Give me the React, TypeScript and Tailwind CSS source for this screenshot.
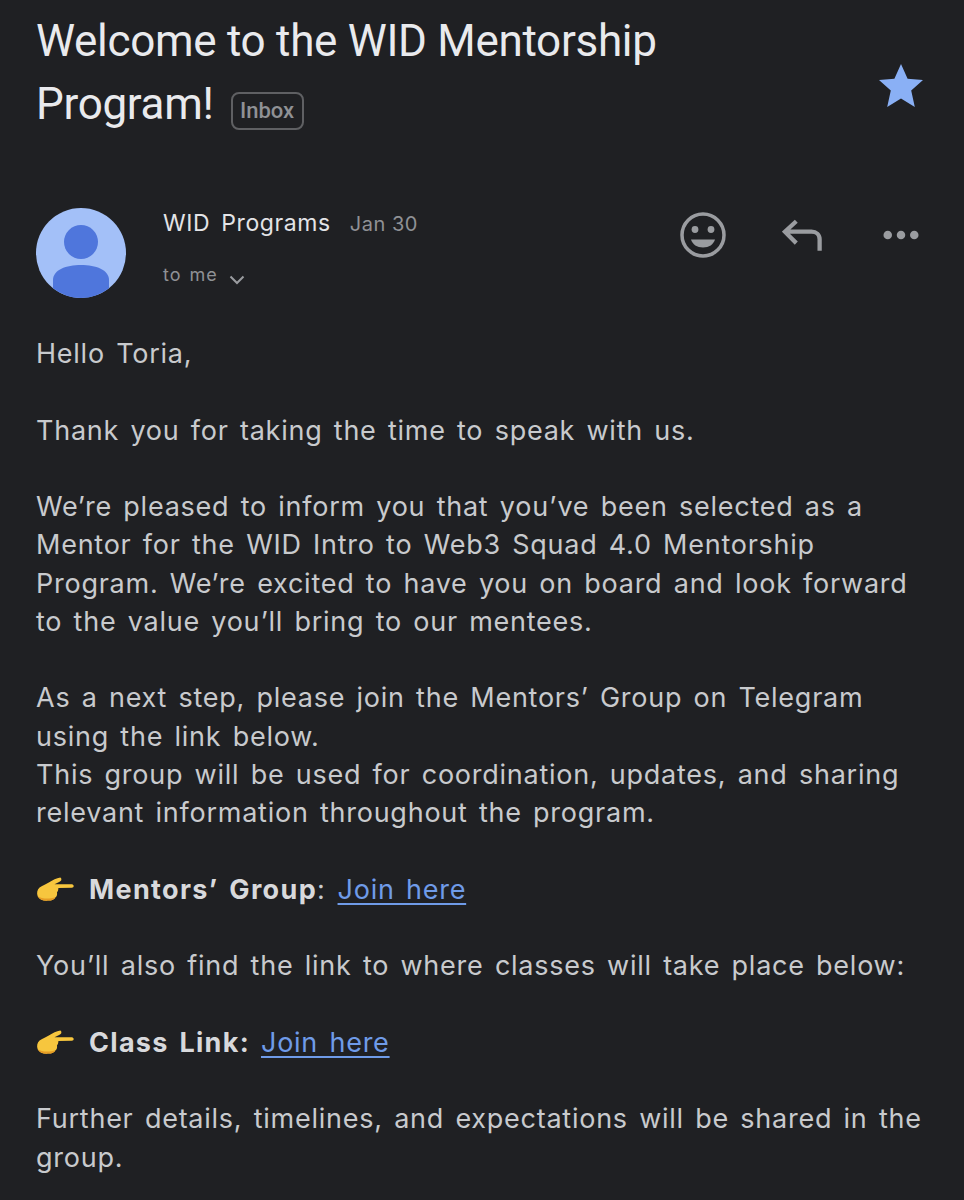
function PointingHand() {
  return (
    <svg viewBox="0 0 40 28" className="w-[39px] h-[27px] inline-block shrink-0" aria-hidden="true">
      <path d="M25 1.500 C26.500 2 26.500 4.500 25 5.500 C23.500 6.500 21 7.500 19 8.500 L37 8.500 C39.500 8.800 39.500 12 37 12.200 L23 12.500 C23 14.500 22.500 16 21.500 17 C22 19 21.500 21 20 22 C19 24.500 16 25.500 13 25.500 C8 26 3.500 25 1.500 21 C0.300 18 1 14 3.500 12 C7 9.500 10.500 8.500 13.500 6.500 C17 4.500 21 2 25 1.500 Z" fill="#f7c63e" />
      <path d="M1.500 21 C3.500 25 8 26 13 25.500 C16 25.500 19 24.500 20 22 C14 24 6 24 1.500 21 Z" fill="#e69c25" />
    </svg>
  );
}

export default function App() {
  return (
    <div className="w-[964px] h-[1200px] overflow-hidden bg-[#1f2023] font-['Inter',sans-serif]">
      {/* Subject */}
      <div className="flex justify-between pl-[36px] pr-[41px] pt-[10px]">
        <h1 className="w-[700px] font-['Roboto',sans-serif] text-[44px] leading-[63px] font-normal text-[#e9eaed] tracking-[-0.3px]">
          Welcome to the WID Mentorship
          <br />
          Program!
          <span className="inline-flex items-center justify-center ml-[17px] w-[73px] h-[38px] align-[1px] rounded-[8px] border-2 border-[#5f6063] text-[22px] font-medium leading-none tracking-normal text-[#8f9195]">
            Inbox
          </span>
        </h1>
        <svg viewBox="0 0 44 44" className="w-[44px] h-[44px] mt-[54px] shrink-0" aria-hidden="true">
          <path d="M22 0 L28.6 14.8 L44 16 L32.2 26.4 L35.8 43 L22 34.4 L8.2 43 L11.8 26.4 L0 16 L15.4 14.8 Z" fill="#8ab0f5" />
        </svg>
      </div>

      {/* Sender row */}
      <div className="flex pl-[36px] pr-[45px] mt-[72px]">
        <svg viewBox="0 0 90 90" className="w-[90px] h-[90px] shrink-0" aria-hidden="true">
          <circle cx="45" cy="45" r="45" fill="#a3c0f8" />
          <circle cx="45" cy="34" r="17" fill="#4f76dc" />
          <path d="M17 80.200 V72 C17 62 30 57 45 57 C60 57 73 62 73 72 V80.200 A45 45 0 0 1 17 80.200 Z" fill="#4f76dc" />
        </svg>
        <div className="ml-[37px] flex-1 pt-[1px]">
          <div className="flex items-baseline h-[28px]">
            <span className="text-[23px] leading-[28px] tracking-[0.6px] [word-spacing:4px] text-[#e3e4e7]">WID Programs</span>
            <span className="ml-[19px] text-[20px] tracking-[0.5px] text-[#8f9195]">Jan 30</span>
          </div>
          <div className="flex items-center mt-[27px]">
            <span className="text-[18px] leading-[22px] tracking-[1px] [word-spacing:2px] text-[#8f9195]">to me</span>
            <svg viewBox="0 0 16 10" className="w-[16px] h-[10px] ml-[11px] mt-[10px]" aria-hidden="true">
              <path d="M1.500 1.500 L8 8 L14.500 1.500" fill="none" stroke="#9a9ca0" strokeWidth="2" />
            </svg>
          </div>
        </div>
        <div className="flex items-start mt-[4px]">
          <svg viewBox="0 0 46 46" className="w-[46px] h-[46px]" aria-hidden="true">
            <circle cx="23" cy="23" r="21" fill="none" stroke="#9a9ca0" strokeWidth="3.500" />
            <circle cx="15" cy="17.500" r="3.400" fill="#9a9ca0" />
            <circle cx="31" cy="17.500" r="3.400" fill="#9a9ca0" />
            <path d="M11 27.500 H35 C33.500 32.500 29 35.500 23 35.500 C17 35.500 12.500 32.500 11 27.500 Z" fill="#9a9ca0" />
          </svg>
          <svg viewBox="0 0 42 34" className="w-[40px] h-[33px] ml-[56px] mt-[7px]" aria-hidden="true">
            <path d="M15 2 L3 13 L15 25 M3 13 H31 C36 13 39.500 16 39.500 21 V33" fill="none" stroke="#9a9ca0" strokeWidth="4.500" />
          </svg>
          <svg viewBox="0 0 38 12" className="w-[36px] h-[12px] ml-[61px] mt-[17px]" aria-hidden="true">
            <circle cx="5" cy="6" r="4.500" fill="#9a9ca0" />
            <circle cx="19" cy="6" r="4.500" fill="#9a9ca0" />
            <circle cx="33" cy="6" r="4.500" fill="#9a9ca0" />
          </svg>
        </div>
      </div>

      {/* Message body */}
      <div className="mt-[37px] pl-[36px] pr-[20px] text-[27px] leading-[38.27px] tracking-[0.75px] [word-spacing:3px] text-[#c8cacd] flex flex-col gap-[38.27px]">
        <p>Hello Toria,</p>
        <p>Thank you for taking the time to speak with us.</p>
        <p>
          We’re pleased to inform you that you’ve been selected as a
          <br />
          Mentor for the WID Intro to Web3 Squad 4.0 Mentorship
          <br />
          Program. We’re excited to have you on board and look forward
          <br />
          to the value you’ll bring to our mentees.
        </p>
        <p>
          As a next step, please join the Mentors’ Group on Telegram
          <br />
          using the link below.
          <br />
          This group will be used for coordination, updates, and sharing
          <br />
          relevant information throughout the program.
        </p>
        <p className="flex items-center">
          <PointingHand />
          <span className="ml-[14px] font-bold tracking-[1.35px] text-[#d8d9dc]">Mentors’ Group</span>
          <span>:</span>
          <a href="#" className="ml-[12px] text-[#6f9be8] underline underline-offset-[4px]">Join here</a>
        </p>
        <p>You’ll also find the link to where classes will take place below:</p>
        <p className="flex items-center">
          <PointingHand />
          <span className="ml-[14px] font-bold tracking-[1.3px] text-[#d8d9dc]">Class Link:</span>
          <a href="#" className="ml-[11px] text-[#6f9be8] underline underline-offset-[4px]">Join here</a>
        </p>
        <p>
          Further details, timelines, and expectations will be shared in the
          <br />
          group.
        </p>
      </div>
    </div>
  );
}
